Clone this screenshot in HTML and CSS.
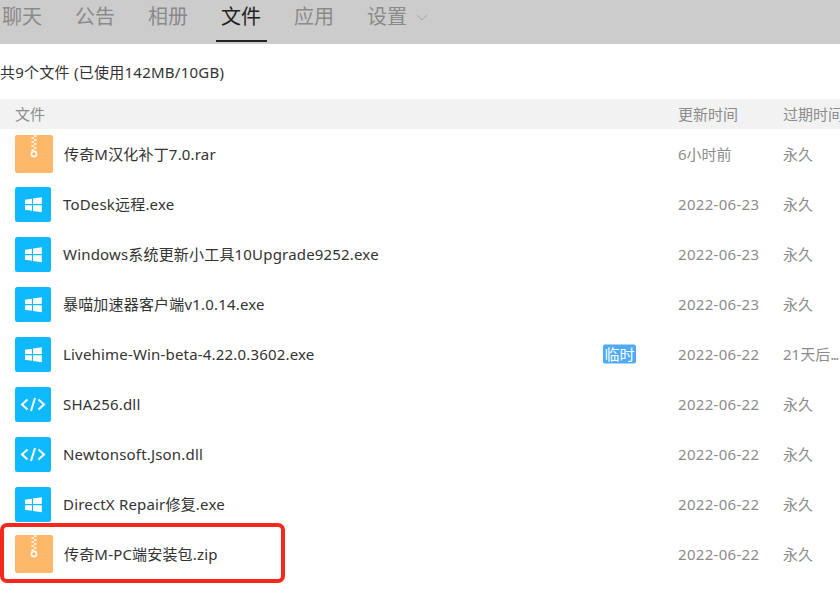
FILE: index.html
```html
<!DOCTYPE html>
<html lang="zh-CN">
<head>
<meta charset="utf-8">
<title>群文件</title>
<link rel="stylesheet" href="styles.css">
</head>
<body>
<svg class="defs" width="0" height="0" aria-hidden="true">
  <symbol id="zip" viewBox="0 0 38 38">
    <rect width="38" height="38" rx="2" fill="#fdb869"/>
    <path d="M19 0h2.500v2H19zM16.500 2H19v2h-2.500zM19 4h2.500v2H19zM16.500 6H19v2h-2.500zM19 8h2.500v2H19zM16.500 10H19v2h-2.500zM19 12h2.500v2H19zM16.500 14H19v2h-2.500z" fill="#fff" opacity=".75"/>
    <circle cx="19" cy="19" r="2.600" fill="none" stroke="#fff" stroke-width="1.700" opacity=".9"/>
  </symbol>
  <symbol id="win" viewBox="0 0 36 35">
    <rect width="36" height="35" rx="2.500" fill="#0fb9fd"/>
    <path d="M10 12.700l6.900-1v5.400H10zM18 11.500l8.800-1.300v6.900H18zM10 18.300h6.900v5.400l-6.900-1zM18 18.300h8.800v6.900L18 24z" fill="#fff"/>
  </symbol>
  <symbol id="code" viewBox="0 0 36 35">
    <rect width="36" height="35" rx="2.500" fill="#0fb9fd"/>
    <path d="M12.500 12.500L7 17.500l5.500 5M23.500 12.500l5.500 5-5.500 5M20 11l-4 13" fill="none" stroke="#fff" stroke-width="2"/>
  </symbol>
</svg>

<nav class="tabs">
  <a class="tab">聊天</a>
  <a class="tab">公告</a>
  <a class="tab">相册</a>
  <a class="tab active">文件</a>
  <a class="tab">应用</a>
  <a class="tab">设置<svg class="chev" width="12" height="7" viewBox="0 0 12 7"><path d="M1 1l5 5 5-5" fill="none" stroke="#a6a6a6" stroke-width="1"/></svg></a>
</nav>

<p class="summary">共9个文件 (已使用142MB/10GB)</p>

<div class="head row-grid">
  <span>文件</span><span>更新时间</span><span class="clip">过期时间</span>
</div>

<ul class="list">
  <li class="row row-grid"><div class="name"><svg class="ic-zip"><use href="#zip"/></svg><span class="fname zipname">传奇M汉化补丁7.0.rar</span></div><span class="meta">6小时前</span><span class="meta">永久</span></li>
  <li class="row row-grid"><div class="name"><svg class="ic"><use href="#win"/></svg><span class="fname">ToDesk远程.exe</span></div><span class="meta date">2022-06-23</span><span class="meta">永久</span></li>
  <li class="row row-grid"><div class="name"><svg class="ic"><use href="#win"/></svg><span class="fname">Windows系统更新小工具10Upgrade9252.exe</span></div><span class="meta date">2022-06-23</span><span class="meta">永久</span></li>
  <li class="row row-grid"><div class="name"><svg class="ic"><use href="#win"/></svg><span class="fname">暴喵加速器客户端v1.0.14.exe</span></div><span class="meta date">2022-06-23</span><span class="meta">永久</span></li>
  <li class="row row-grid"><div class="name"><svg class="ic"><use href="#win"/></svg><span class="fname">Livehime-Win-beta-4.22.0.3602.exe</span><span class="tag">临时</span></div><span class="meta date">2022-06-22</span><span class="meta">21天后<span class="dots">...</span></span></li>
  <li class="row row-grid"><div class="name"><svg class="ic"><use href="#code"/></svg><span class="fname">SHA256.dll</span></div><span class="meta date">2022-06-22</span><span class="meta">永久</span></li>
  <li class="row row-grid"><div class="name"><svg class="ic"><use href="#code"/></svg><span class="fname">Newtonsoft.Json.dll</span></div><span class="meta date">2022-06-22</span><span class="meta">永久</span></li>
  <li class="row row-grid"><div class="name"><svg class="ic"><use href="#win"/></svg><span class="fname">DirectX Repair修复.exe</span></div><span class="meta date">2022-06-22</span><span class="meta">永久</span></li>
  <li class="row row-grid marked"><div class="name"><svg class="ic-zip"><use href="#zip"/></svg><span class="fname zipname">传奇M-PC端安装包.zip</span></div><span class="meta date">2022-06-22</span><span class="meta">永久</span><span class="highlight"></span></li>
</ul>
</body>
</html>
```

FILE: styles.css
```css
* { box-sizing: border-box; }
html, body { margin: 0; padding: 0; }
body {
  width: 840px;
  height: 602px;
  overflow: hidden;
  background: #fff;
  font-family: "Noto Sans", "Noto Sans CJK SC", sans-serif;
  color: #333;
}
.defs { position: absolute; }

.tabs {
  height: 44px;
  background: #cccccc;
  display: flex;
  gap: 33px;
  padding-left: 2px;
}
.tab {
  position: relative;
  width: 40px;
  height: 44px;
  font-size: 20px;
  line-height: 34px;
  color: #8a8a8a;
  white-space: nowrap;
}
.tab.active { color: #222; }
.tab.active::after {
  content: "";
  position: absolute;
  left: -5px;
  width: 51px;
  top: 40px;
  height: 2px;
  background: #222;
}
.chev { margin-left: 9px; vertical-align: 3px; }

.summary {
  margin: 0;
  height: 55px;
  padding-top: 18px;
  font-size: 15px;
  line-height: 20px;
  letter-spacing: 0.25px;
  color: #333;
  white-space: nowrap;
}

.row-grid {
  display: grid;
  grid-template-columns: 663px 105px 57px;
  padding-left: 15px;
  align-items: center;
  white-space: nowrap;
  font-size: 15px;
}
.head {
  height: 30px;
  background: #f2f2f2;
  color: #8c8c8c;
  line-height: 28px;
}
.clip { overflow: hidden; }

.list { list-style: none; margin: 0; padding: 0; }
.row { height: 50px; position: relative; line-height: 20px; }
.name { display: flex; align-items: center; position: relative; }
.ic { width: 36px; height: 35px; flex: none; }
.ic-zip { width: 38px; height: 38px; flex: none; }
.fname {
  margin-left: 12px;
  color: #333;
  letter-spacing: 0.18px;
}
.zipname { margin-left: 11px; }
.meta {
  color: #8c8c8c;
  overflow: hidden;
}
.date { letter-spacing: 0.3px; }
.dots { letter-spacing: -1.500px; }
.tag {
  position: absolute;
  left: 588px;
  top: 50%;
  transform: translateY(-50%);
  width: 33px;
  height: 19px;
  line-height: 18px;
  text-align: center;
  font-size: 15px;
  color: #fff;
  background: #4dabf7;
  border-radius: 2px;
}
.highlight {
  position: absolute;
  left: 0;
  top: -6px;
  width: 285px;
  height: 60px;
  border: 4px solid #f4291c;
  border-radius: 7px;
  pointer-events: none;
}
```
